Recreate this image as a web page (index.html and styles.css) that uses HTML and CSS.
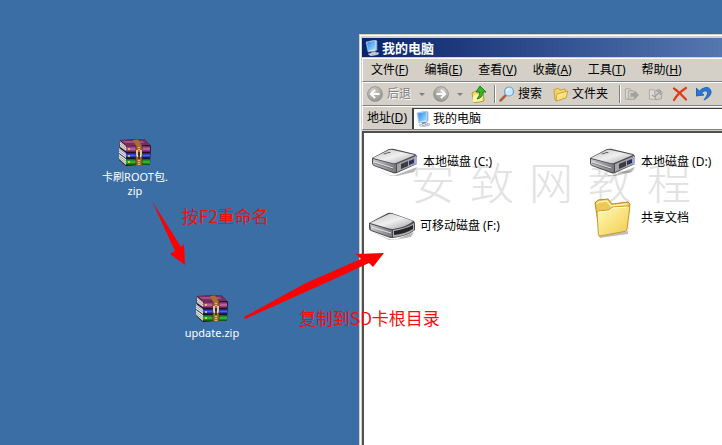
FILE: index.html
```
<!DOCTYPE html>
<html lang="zh-CN">
<head>
    <meta charset="UTF-8">
    <meta name="viewport" content="width=device-width, initial-scale=1.0">
    <title>我的电脑</title>
    <link rel="stylesheet" href="styles.css">
</head>
<body>
    <!-- Shared icons -->
    <svg class="sprite" width="0" height="0" aria-hidden="true">
        <defs>
            <linearGradient id="purple" x1="0" x2="0" y1="0" y2="1"><stop offset="0" stop-color="#6d1f57"/><stop offset=".5" stop-color="#c76ab0"/><stop offset="1" stop-color="#541343"/></linearGradient>
            <linearGradient id="blue" x1="0" x2="0" y1="0" y2="1"><stop offset="0" stop-color="#10187c"/><stop offset=".5" stop-color="#4a62f4"/><stop offset="1" stop-color="#080c5c"/></linearGradient>
            <linearGradient id="green" x1="0" x2="0" y1="0" y2="1"><stop offset="0" stop-color="#0a5a14"/><stop offset=".5" stop-color="#36c43c"/><stop offset="1" stop-color="#06430c"/></linearGradient>
            <linearGradient id="metal" x1="0" x2="1" y1="0" y2="1"><stop offset="0" stop-color="#c4c4c6"/><stop offset=".5" stop-color="#f0f0f1"/><stop offset="1" stop-color="#a2a2a6"/></linearGradient>
            <linearGradient id="side" x1="0" x2="1"><stop offset="0" stop-color="#c8c8cb"/><stop offset="1" stop-color="#77777c"/></linearGradient>
            <linearGradient id="paper" x1="0" x2="1" y1="0" y2="1"><stop offset="0" stop-color="#fffbb8"/><stop offset="1" stop-color="#f2cb4c"/></linearGradient>
            <linearGradient id="screen" x1="0" x2="1" y1="0" y2="1"><stop offset="0" stop-color="#2a82e4"/><stop offset="1" stop-color="#9fe4ff"/></linearGradient>
            <radialGradient id="ball" cx=".4" cy=".3" r=".7"><stop offset="0" stop-color="#d2d0cb"/><stop offset="1" stop-color="#96948f"/></radialGradient>
        </defs>
        <symbol id="icon-rar" viewBox="0 0 34 28">
            <path d="M2 2 26 1l7 7-1 18-24 2-7-6z" fill="#201018"/>
            <path d="M2 2 26 1l6 6-23 1z" fill="#7a2c62"/>
            <path d="M4 3h20l3 2H7z" fill="#9c5084"/>
            <path d="m2 3 6 5v5L2 9z" fill="#ece6e2"/>
            <path d="m2 4 6 5M2 6l6 5M2 8l6 5" stroke="#8d7777" stroke-width=".7"/>
            <path d="M8 8h24v6H8z" fill="url(#purple)"/>
            <path d="m1 10 7 5v5l-7-5z" fill="#e8e8f0"/>
            <path d="m1 11 7 5m-7-3 7 5" stroke="#7777a0" stroke-width=".7"/>
            <path d="M8 15h24v5H8z" fill="url(#blue)"/>
            <path d="m1 16 7 5v6l-7-6z" fill="#e6eee6"/>
            <path d="m1 18 7 5m-7-3 7 5" stroke="#6c8870" stroke-width=".7"/>
            <path d="M8 21h24v6H8z" fill="url(#green)"/>
            <path d="m15 2 5-.5 4 6.500V27h-6V8z" fill="#a86d30"/>
            <path d="M18 8v19M24 8v19" stroke="#55300f" stroke-width=".8"/>
            <path d="M21 9v3M21 22v5" stroke="#e4bc74" stroke-width="2" stroke-dasharray="1 1"/>
            <path d="M19 12v5c0 2 4 2 4 0v-5" fill="none" stroke="#f5f0e4" stroke-width="1.400"/>
            <path d="M21 14v7" stroke="#2a2118" stroke-width="1.600"/>
            <path d="M11 10v2m0 5v2m0 4v2" stroke="#ffd84a" stroke-width="1.500"/>
        </symbol>
        <symbol id="icon-computer" viewBox="0 0 16 16">
            <path d="m2 2 9-2 2 1v9l-2 1-7 1z" fill="#dcebfa" stroke="#7f9dc4" stroke-width=".6"/>
            <path d="m3 2.500 8-1.700v8.500l-7 1.500z" fill="url(#screen)"/>
            <path d="m11.500.5 1.500 1v8l-1.500 1z" fill="#8fb4e0"/>
            <path d="M7 11h4l1 2H7z" fill="#8290a8"/>
            <path d="m4 14 7-2 4 1-1 1.500L7 16z" fill="#edf1f6" stroke="#8796ad" stroke-width=".6"/>
            <path d="m7 14.500 6-1" stroke="#7c8ba2" stroke-width=".7"/>
        </symbol>
        <symbol id="icon-drive" viewBox="0 0 48 28">
            <path d="M3 19 19 27q3 1 6 0l21-8-3 5-17 4h-6z" fill="#000" opacity=".28"/>
            <path d="M1 10 18 1q2-.5 4-.3L44 6q2 1 2 3v7L26 25q-2 .8-4 0L3 18q-2-1-2-3z" fill="#4d4d50"/>
            <path d="M2 10 18 2q2-.5 4 0L44 7 25 15q-2 .6-4 0z" fill="url(#metal)"/>
            <path d="m2 11 20 5q2 .4 3 0v8q-2 .4-4-.5L3 17q-1-.5-1-2z" fill="url(#side)"/>
            <path d="m3 14 19 6" stroke="#f0f0f2" stroke-width=".9"/>
            <path d="m3 15 19 6" stroke="#65656a" stroke-width=".7"/>
            <path d="m26 16 19-8v8l-19 8z" fill="#a3a3aa"/>
            <path d="m30 16 7-3v5l-7 3z" fill="#3c3c40"/>
            <path d="m38 13 5-2v4l-5 2z" fill="#2b2f60"/>
            <path d="m44 8 2 1v7l-2 1z" fill="#aaaed8"/>
            <path d="m12 6 6-2 2 .6-6 2z" fill="#444"/>
            <path d="m13 7 5-2" stroke="#eee" stroke-width=".6"/>
        </symbol>
        <symbol id="icon-removable" viewBox="0 0 48 28">
            <path d="m4 20 17 7q4 1 8 0l17-7-3 5-17 3h-5z" fill="#000" opacity=".28"/>
            <path d="M1 11 20 1q2-.6 4 0l22 8q1 1 1 3v6q-7 6-22 8-2 .3-4-.5L3 19q-2-1-2-3z" fill="#4d4d50"/>
            <path d="M2 11 21 2q2-.4 4 0l20 7q-4 5-20 8-2 .2-4-.4z" fill="url(#metal)"/>
            <path d="m2 12 20 6 2 .3V25l-3-.5L3 18z" fill="url(#side)"/>
            <path d="m3 15 20 6" stroke="#ececef" stroke-width=".9"/>
            <path d="M25 18q14-2 21-7v7q-8 6-21 7z" fill="#aeaeb2"/>
            <path d="M26 19q11-2 19-6v4q-8 5-19 6z" fill="#252527"/>
        </symbol>
        <symbol id="icon-folder-large" viewBox="0 0 40 40">
            <path d="m5 37 30-4 3-28-3 31-28 4z" fill="#000" opacity=".25"/>
            <path d="m2 5 3-3 10-1 4 5 16-2 2 2-4 26-26 5z" fill="#efc756" stroke="#b98a22"/>
            <path d="m4 6 2-2 8-1 4 5 16-2" fill="none" stroke="#fff2ac" stroke-width="1.500"/>
            <path d="M4 15q0-2 2-2l10-1 4-3 15-1q2 0 1.700 2L34 31q0 2-2 2.400L7 38q-1.500 0-1.600-1.500z" fill="url(#paper)" stroke="#c99a2c"/>
            <path d="M5 15q0-1 1-1l10-1 4-3 14-1" fill="none" stroke="#fffde0"/>
        </symbol>
        <symbol id="icon-folder" viewBox="0 0 16 16">
            <path d="M1 4 5 2l2 2 5-1 1 4-9 8-2-1z" fill="#f5d560" stroke="#bf942c" stroke-width=".8"/>
            <path d="m4 8 11-3-2 7-10 3z" fill="url(#paper)" stroke="#c49629" stroke-width=".8"/>
        </symbol>
        <symbol id="icon-up" viewBox="0 0 16 18">
            <path d="m1 8 4-2 2 1 5-1 1 10-10 2z" fill="#f4d85e" stroke="#b18c26" stroke-width=".8"/>
            <path d="m2 10 10-2-1 8-9 1z" fill="#fff3a4"/>
            <path d="m9 1 6 6-3-.2q0 6-6 7.200 3-3 2.500-7L5 7z" fill="#37b52e" stroke="#167614" stroke-width=".9"/>
        </symbol>
        <symbol id="icon-back" viewBox="0 0 16 16">
            <circle cx="8" cy="8" r="7.500" fill="url(#ball)" stroke="#898783" stroke-width=".6"/>
            <path d="M12.500 8H4M8 4 4 8l4 4" fill="none" stroke="#fff" stroke-width="2"/>
        </symbol>
        <symbol id="icon-search" viewBox="0 0 16 16">
            <path d="m1.500 14.500 5-5" stroke="#a9643e" stroke-width="2.500" stroke-linecap="round"/>
            <circle cx="10" cy="5.500" r="4.500" fill="#cbe9fc" stroke="#6d9fd2" stroke-width="1.200"/>
            <path d="M7.500 5q.5-2 2.500-2.200" fill="none" stroke="#fff" stroke-width="1.300"/>
        </symbol>
        <symbol id="icon-move" viewBox="0 0 17 16">
            <path d="M1.500 2.500h5l2 2v9h-7z" fill="#dedbd4" stroke="#a6a49f"/>
            <path d="M4.500 4.500h5l2 2v7h-7z" fill="#cfccc5" stroke="#a6a49f"/>
            <path d="M7 7h4V4l5 5-5 5v-3H7z" fill="#a3a19c"/>
        </symbol>
        <symbol id="icon-copy" viewBox="0 0 17 16">
            <path d="M1.500 3.500h5l2 2v8h-7z" fill="#dedbd4" stroke="#aaa8a3"/>
            <path d="m7 5 5-2 3 3-1 7-6 1z" fill="#d2cfc8" stroke="#a19f9a"/>
            <path d="m4 9 3 2 5-5M9 5h4v4" fill="none" stroke="#9d9b96" stroke-width="1.300"/>
        </symbol>
        <symbol id="icon-delete" viewBox="0 0 16 16">
            <path d="M2 2.500q6 4 12 11M14 2Q6 7 2 14" fill="none" stroke="#e03a18" stroke-width="2.200" stroke-linecap="round"/>
        </symbol>
        <symbol id="icon-undo" viewBox="0 0 16 16">
            <path d="M0 2v8l8-1-2.500-2Q8 4 10.500 5q3 2-2.500 9 8-4 7-9Q13 0 8 2 5 3 3.500 5z" fill="#2877d8" stroke="#1552a8" stroke-width=".8"/>
        </symbol>
    </svg>

    <main class="desktop">
        <a href="#root" class="shortcut shortcut-root">
            <svg class="icon-rar"><use href="#icon-rar"/></svg>
            <span>卡刷ROOT包.<br>zip</span>
        </a>
        <a href="#update" class="shortcut shortcut-update">
            <svg class="icon-rar"><use href="#icon-rar"/></svg>
            <span>update.zip</span>
        </a>

        <section class="window">
            <header class="title-bar">
                <svg class="icon"><use href="#icon-computer"/></svg>
                <h1>我的电脑</h1>
            </header>
            <nav class="menu-bar">
                <button>文件(<u>F</u>)</button>
                <button>编辑(<u>E</u>)</button>
                <button>查看(<u>V</u>)</button>
                <button>收藏(<u>A</u>)</button>
                <button>工具(<u>T</u>)</button>
                <button>帮助(<u>H</u>)</button>
            </nav>
            <div class="toolbar">
                <div class="tool-group">
                    <button class="disabled" disabled><svg class="icon"><use href="#icon-back"/></svg>后退<i class="caret"></i></button>
                    <button class="disabled" disabled aria-label="前进"><svg class="icon flip"><use href="#icon-back"/></svg><i class="caret"></i></button>
                    <button aria-label="向上"><svg class="icon icon-tall"><use href="#icon-up"/></svg></button>
                </div>
                <div class="tool-group wide">
                    <button><svg class="icon"><use href="#icon-search"/></svg>搜索</button>
                    <button><svg class="icon"><use href="#icon-folder"/></svg>文件夹</button>
                </div>
                <div class="tool-group">
                    <button disabled aria-label="移至"><svg class="icon"><use href="#icon-move"/></svg></button>
                    <button disabled aria-label="复制到"><svg class="icon"><use href="#icon-copy"/></svg></button>
                    <button aria-label="删除"><svg class="icon"><use href="#icon-delete"/></svg></button>
                    <button aria-label="撤消"><svg class="icon"><use href="#icon-undo"/></svg></button>
                </div>
            </div>
            <div class="address-bar">
                <label for="address">地址(<u>D</u>)</label>
                <div class="address-box">
                    <svg class="icon"><use href="#icon-computer"/></svg>
                    <input type="text" id="address" value="我的电脑">
                </div>
            </div>
            <div class="content">
                <div class="watermark"><span>安</span><span>致</span><span>网</span><span>教</span><span>程</span></div>
                <div class="files">
                    <a href="#c"><svg class="icon-drive"><use href="#icon-drive"/></svg>本地磁盘 (C:)</a>
                    <a href="#d"><svg class="icon-drive"><use href="#icon-drive"/></svg>本地磁盘 (D:)</a>
                    <a href="#f" class="removable"><svg class="icon-drive"><use href="#icon-removable"/></svg>可移动磁盘 (F:)</a>
                    <a href="#shared"><svg class="icon-folder-large"><use href="#icon-folder-large"/></svg>共享文档</a>
                </div>
            </div>
        </section>

        <!-- Step arrows and notes over the desktop -->
        <svg class="arrow arrow-rename" viewBox="0 0 34 64"><path d="M0 0 29 46l3-3 1 21-15-11 5-3z"/></svg>
        <p class="note note-rename">按F2重命名</p>
        <svg class="arrow arrow-copy" viewBox="0 0 140 66"><path d="M0 64 62 30 117 6l-5-5 28-1-11 14-4-4L88 27 1 66z"/></svg>
        <p class="note note-copy">复制到SD卡根目录</p>
    </main>
</body>
</html>
```

FILE: styles.css
```
* {
    box-sizing: border-box;
}
body {
    margin: 0;
    font-family: "Noto Sans", "Noto Sans CJK SC", sans-serif;
    font-size: 12px;
    line-height: 16px;
    color: #000;
}
button {
    display: flex;
    align-items: center;
    gap: 4px;
    padding: 0;
    border: none;
    background: none;
    font: inherit;
    color: inherit;
    white-space: pre;
}
a {
    color: inherit;
    text-decoration: none;
}
svg {
    display: block;
    flex: none;
}
.sprite {
    position: absolute;
}
.desktop {
    position: relative;
    min-height: 100vh;
    overflow: hidden;
    background-color: #3a6ea5;
}
.icon {
    width: 16px;
    height: 16px;
}
.icon-tall {
    height: 18px;
}
.flip {
    transform: scaleX(-1);
}

/* Desktop shortcuts */
.shortcut {
    position: absolute;
    display: flex;
    flex-direction: column;
    align-items: center;
    gap: 4px;
    width: 80px;
    color: #fff;
    font-size: 11px;
    line-height: 14px;
    text-align: center;
}
.shortcut-root {
    left: 95px;
    top: 138px;
}
.shortcut-update {
    left: 172px;
    top: 294px;
}
.icon-rar {
    width: 34px;
    height: 28px;
}

/* Explorer window */
.window {
    position: absolute;
    left: 359px;
    top: 34px;
    right: 0;
    bottom: 0;
    display: flex;
    flex-direction: column;
    padding: 2px 0 0 1px;
    border-left: 1px solid #d4d0c8;
    border-top: 1px solid #d4d0c8;
    background-color: #d4d0c8;
    box-shadow: inset 1px 1px #fff;
}
.title-bar {
    display: flex;
    align-items: center;
    gap: 2px;
    height: 19px;
    margin: 1px 0 1px 1px;
    padding-left: 2px;
    background: linear-gradient(to right, #0a246a, #5577b0);
    color: #fff;
}
.title-bar h1 {
    margin: 0;
    font-size: 13px;
}
.menu-bar, .toolbar, .address-bar {
    display: flex;
    align-items: center;
    height: 24px;
    margin-left: 1px;
    border-top: 1px solid #fff;
    border-left: 1px solid #fff;
    border-bottom: 1px solid #808080;
}
.menu-bar {
    gap: 16px;
    padding-left: 8px;
}
.menu-bar button {
    gap: 0;
}
.tool-group {
    display: flex;
    align-items: center;
    gap: 8px;
    padding: 0 7px 0 4px;
    height: 18px;
}
.tool-group + .tool-group {
    border-left: 1px solid #808080;
    box-shadow: inset 1px 0 #fff;
}
.tool-group.wide {
    gap: 11px;
    padding-right: 11px;
}
.tool-group.wide button {
    gap: 3px;
}
.disabled {
    color: #808080;
    text-shadow: 1px 1px #fff;
}
.caret {
    margin-left: 4px;
    border: 3px solid transparent;
    border-top-color: #808080;
    border-bottom: none;
}
.address-bar {
    gap: 5px;
    padding-left: 4px;
}
.address-box {
    display: flex;
    flex: 1;
    align-items: center;
    gap: 2px;
    height: 21px;
    padding-left: 1px;
    border-left: 2px solid #404040;
    border-top: 1px solid #404040;
    background-color: #fff;
}
.address-box input {
    flex: 1;
    min-width: 0;
    padding: 0;
    border: none;
    outline: none;
    background: none;
    font: inherit;
}
.content {
    position: relative;
    flex: 1;
    margin: 1px 0 0 1px;
    padding: 11px 0 0 7px;
    border-top: 2px solid #505050;
    border-left: 2px solid #505050;
    background-color: #fff;
}
.files {
    position: relative;
    display: grid;
    grid-template-columns: 218px 218px;
    row-gap: 20px;
}
.files a {
    display: flex;
    align-items: center;
    gap: 4px;
    height: 36px;
    white-space: nowrap;
}
.files .removable {
    margin: 8px 0 0 -3px;
}
.icon-drive {
    width: 48px;
    height: 28px;
}
.icon-folder-large {
    width: 40px;
    height: 40px;
    margin: 0 4px;
}
.watermark {
    position: absolute;
    left: 47px;
    top: 28px;
    display: flex;
    gap: 15px;
    color: #e2e2e2;
    font-size: 44px;
    font-weight: 300;
    line-height: 44px;
}

/* Notes */
.arrow {
    position: absolute;
    fill: #f00;
}
.arrow-rename {
    left: 152px;
    top: 201px;
    width: 34px;
    height: 64px;
}
.arrow-copy {
    left: 244px;
    top: 253px;
    width: 140px;
    height: 66px;
}
.note {
    position: absolute;
    margin: 0;
    color: #f01010;
    font-family: "Noto Sans CJK SC", sans-serif;
    font-size: 17px;
    font-weight: 400;
    line-height: 24px;
    white-space: nowrap;
}
.note-rename {
    left: 182px;
    top: 204px;
}
.note-copy {
    left: 299px;
    top: 306px;
}
```
